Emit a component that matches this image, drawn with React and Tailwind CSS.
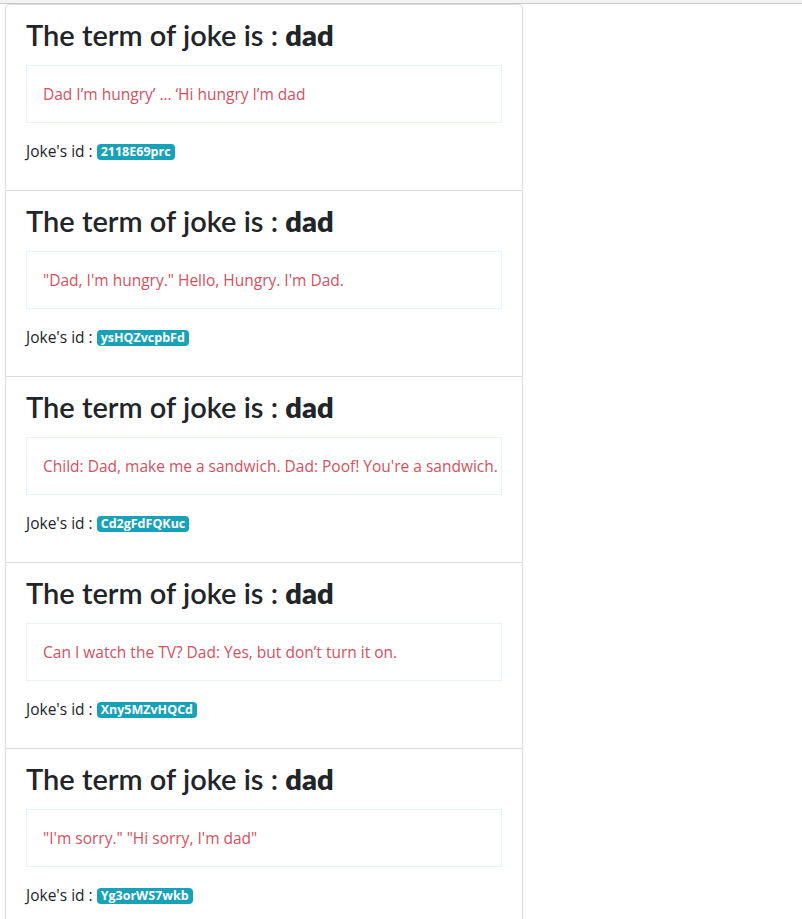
import React from "react";

const jokes = [
  { text: "Dad I\u2019m hungry\u2019 \u2026 \u2018Hi hungry I\u2019m dad", id: "2118E69prc" },
  { text: "\"Dad, I'm hungry.\" Hello, Hungry. I'm Dad.", id: "ysHQZvcpbFd" },
  { text: "Child: Dad, make me a sandwich. Dad: Poof! You're a sandwich.", id: "Cd2gFdFQKuc" },
  { text: "Can I watch the TV? Dad: Yes, but don\u2019t turn it on.", id: "Xny5MZvHQCd" },
  { text: "\"I'm sorry.\" \"Hi sorry, I'm dad\"", id: "Yg3orWS7wkb" },
];

function JokeCard({ joke }) {
  return (
    <div className="px-5 pt-[10px] pb-[27px]">
      <h2 className="mb-[10px] font-['Lato',sans-serif] text-[29px] leading-[40px] font-semibold text-[#212529]">
        The term of joke is : <b className="font-extrabold">dad</b>
      </h2>
      <div className="border border-[#e6f3ff] p-4 text-[15.5px] leading-6 text-[#d6505e] whitespace-nowrap">
        {joke.text}
      </div>
      <p className="mt-4 text-[15.5px] leading-6 text-[#212529]">
        Joke's id :{" "}
        <span className="inline-block rounded-[4px] bg-[#17a2b8] px-[4px] py-[2px] align-[1px] text-[12.5px] font-bold leading-[12px] text-white">
          {joke.id}
        </span>
      </p>
    </div>
  );
}

export default function App() {
  return (
    <div
      className="min-h-screen bg-white"
      style={{ fontFamily: '"Open Sans", "Noto Sans", sans-serif' }}
    >
      <div className="h-[3px] bg-[#f3f3f3]" />
      <div className="h-px bg-[#c9c9c9]" />
      <div className="ml-[5px] w-[518px] divide-y divide-[#dcdcdc] rounded-t-[4px] border border-[#dcdcdc]">
        {jokes.map((j) => (
          <JokeCard key={j.id} joke={j} />
        ))}
      </div>
    </div>
  );
}
